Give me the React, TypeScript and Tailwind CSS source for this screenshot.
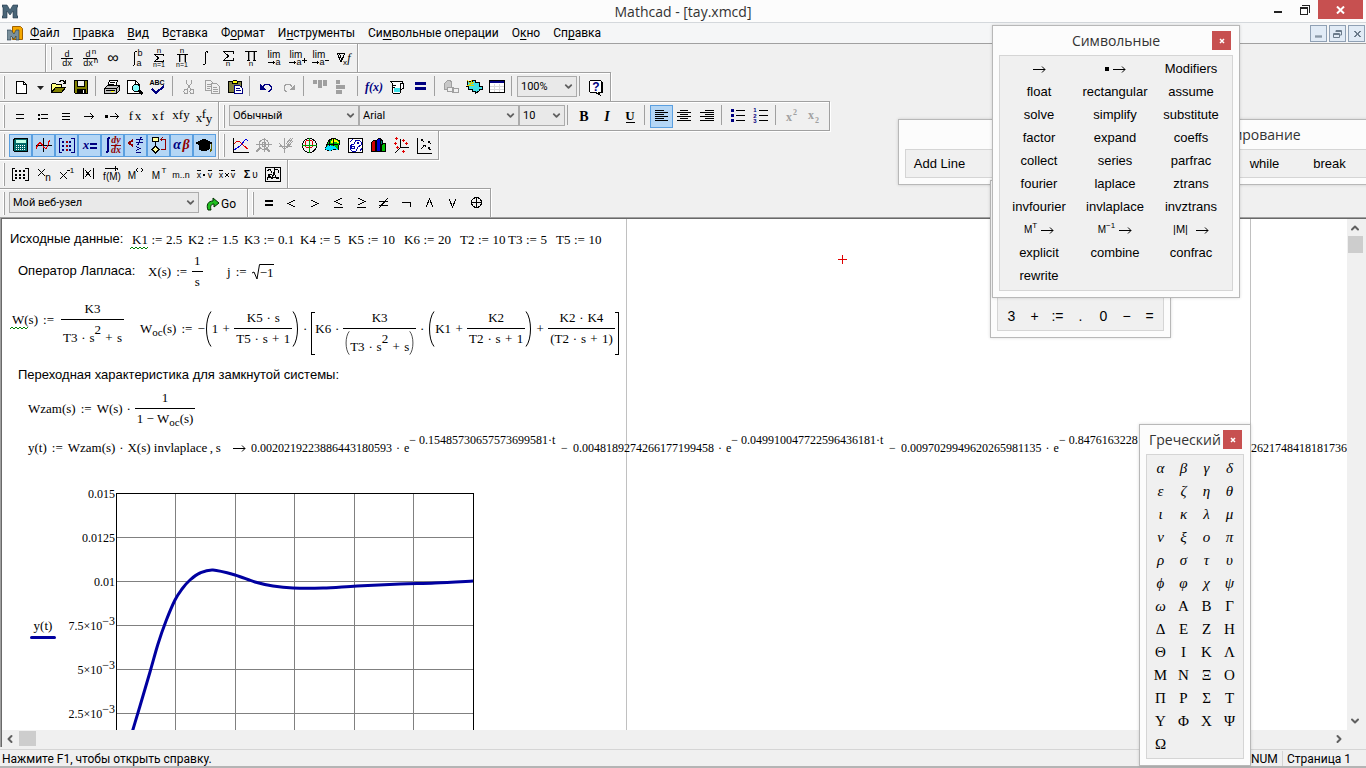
import { ReactNode } from "react";
import { ChevronDown, ChevronLeft, ChevronRight, ChevronUp } from "lucide-react";

const NAVY = "#000080";
const GREY = "#a0a0a0";

/* ---------- icon helpers ---------- */

function Icon({ children, color = "#000" }: { children: ReactNode; color?: string }) {
  return (
    <svg
      width="23"
      height="23"
      viewBox="0 0 23 23"
      fill="none"
      stroke={color}
      shapeRendering="crispEdges"
      aria-hidden="true"
      className="block shrink-0"
    >
      {children}
    </svg>
  );
}

interface GlyphProps {
  x: number;
  y: number;
  size?: number;
  children: ReactNode;
  serif?: boolean;
  bold?: boolean;
  italic?: boolean;
  fill?: string;
}

function Glyph({ x, y, size = 9, children, serif, bold, italic, fill = "#000" }: GlyphProps) {
  return (
    <text
      x={x}
      y={y}
      fontSize={size}
      textAnchor="middle"
      stroke="none"
      fill={fill}
      fontWeight={bold ? 700 : 400}
      fontStyle={italic ? "italic" : "normal"}
      className={serif ? "font-['Liberation_Serif']" : "font-['Liberation_Sans']"}
    >
      {children}
    </text>
  );
}

type Tool = { name: string; icon: ReactNode; active?: boolean };

/* ---------- calculus ---------- */

const calculus: Tool[] = [
  {
    name: "Derivative",
    icon: (
      <Icon>
        <Glyph x={11} y={10} size={9}>d</Glyph>
        <path d="M5 11.5h12" />
        <Glyph x={11} y={19} size={9}>dx</Glyph>
      </Icon>
    ),
  },
  {
    name: "Nth derivative",
    icon: (
      <Icon>
        <Glyph x={9} y={10} size={9}>d</Glyph>
        <Glyph x={15} y={7} size={8}>n</Glyph>
        <path d="M4 11.5h14" />
        <Glyph x={9} y={19} size={9}>dx</Glyph>
        <Glyph x={17} y={16} size={8}>n</Glyph>
      </Icon>
    ),
  },
  { name: "Infinity", icon: <Icon><Glyph x={11} y={16} size={16}>∞</Glyph></Icon> },
  {
    name: "Definite integral",
    icon: (
      <Icon>
        <path d="M11.5 4.5h-1l-1 1v12l-1 1h-1" />
        <Glyph x={15} y={9} size={9}>b</Glyph>
        <Glyph x={14} y={19} size={9}>a</Glyph>
      </Icon>
    ),
  },
  {
    name: "Summation",
    icon: (
      <Icon>
        <Glyph x={11} y={6} size={8}>n</Glyph>
        <path d="M15.5 9V7.500H6.500L10.500 11L6.500 14.500H15.500V13" />
        <Glyph x={11} y={20} size={7}>n=1</Glyph>
      </Icon>
    ),
  },
  {
    name: "Iterated product",
    icon: (
      <Icon>
        <Glyph x={11} y={6} size={8}>n</Glyph>
        <path d="M6 7.500h11M8.500 8v7M14.500 8v7" />
        <path d="M9.500 8v7M13.500 8v7" stroke={GREY} />
        <Glyph x={11} y={20} size={7}>n=1</Glyph>
      </Icon>
    ),
  },
  { name: "Indefinite integral", icon: <Icon><path d="M13.500 5.500v-1h-1l-1 1v11l-1 1h-1v-1" /></Icon> },
  {
    name: "Range summation",
    icon: (
      <Icon>
        <path d="M16.500 7V4.500H6.500L11.500 9L6.500 13.500H16.500V11" />
        <Glyph x={11} y={19} size={8}>n</Glyph>
      </Icon>
    ),
  },
  {
    name: "Range product",
    icon: (
      <Icon>
        <path d="M5 4.500h12M8.500 5v8M14.500 5v8M7 13.500h3M13 13.500h3" />
        <path d="M9.500 5v8M13.500 5v8" stroke={GREY} />
        <Glyph x={11} y={19} size={8}>n</Glyph>
      </Icon>
    ),
  },
  {
    name: "Limit",
    icon: (
      <Icon>
        <Glyph x={11} y={11} size={10}>lim</Glyph>
        <path d="M5 15.500h7M10.500 14v3" />
        <Glyph x={15} y={18} size={9}>a</Glyph>
      </Icon>
    ),
  },
  {
    name: "Right limit",
    icon: (
      <Icon>
        <Glyph x={10} y={11} size={10}>lim</Glyph>
        <path d="M3 15.500h7M8.500 14v3M16 13.500h5M18.500 11v5" />
        <Glyph x={13} y={18} size={9}>a</Glyph>
      </Icon>
    ),
  },
  {
    name: "Left limit",
    icon: (
      <Icon>
        <Glyph x={10} y={11} size={10}>lim</Glyph>
        <path d="M3 15.500h7M8.500 14v3M16 13.500h4" />
        <Glyph x={13} y={18} size={9}>a</Glyph>
      </Icon>
    ),
  },
  {
    name: "Gradient",
    icon: (
      <Icon>
        <path d="M5 6.500h8M5.500 7l3.500 8l3.500-8M7.500 7l2.500 6" />
        <Glyph x={13} y={18} size={8}>x</Glyph>
        <Glyph x={17} y={15} size={12} italic serif>f</Glyph>
      </Icon>
    ),
  },
];

/* ---------- standard ---------- */

const openIcon = (
  <Icon>
    <path d="M4.500 16.500v-8l1-1h3l1 1h5v3" fill="#ffff80" />
    <path d="M4.500 16.500l4-5h10l-4 5z" fill="#808000" />
    <path d="M12 5.500h1l1-1h2l2 2M18.500 4v3h-3" />
  </Icon>
);

const saveIcon = (
  <Icon>
    <path d="M4.500 4.500h13v13h-12l-1-1z" fill="#808000" />
    <path d="M7.500 4.500h7v6h-7z" fill="#f0f0f0" />
    <path d="M7.500 13.500h8v4h-8z" fill="#000" />
    <path d="M13.500 14v3" stroke="#fff" />
  </Icon>
);

const printTools: Tool[] = [
  {
    name: "Print",
    icon: (
      <Icon>
        <path d="M8.500 4.500h8l-2 6h-8z" fill="#fff" />
        <path d="M9 6.500h5M8 8.500h5" />
        <path d="M3.500 12.500l3-3h12v5l-3 3h-12z" fill="#c0c0c0" />
        <path d="M3.500 12.500h12v5M15.500 12.500l3-3M5 14.500h9" />
        <path d="M10 15.500h3" stroke="#ffff00" />
      </Icon>
    ),
  },
  {
    name: "Print preview",
    icon: (
      <Icon>
        <path d="M3.500 4.500h8l4 4v9h-12z" fill="#fff" />
        <path d="M11.500 4.500v4h4" />
        <circle cx="12" cy="12" r="3.500" fill="#80ffff" />
        <path d="M14.500 14.500l4 4M15.500 14.500l3 3" strokeWidth="2" />
      </Icon>
    ),
  },
  {
    name: "Check spelling",
    icon: (
      <Icon>
        <Glyph x={10} y={9} size={7} bold>ABC</Glyph>
        <path d="M5 13l4 4l8-7" stroke={NAVY} strokeWidth="2" />
      </Icon>
    ),
  },
];

const clipboardTools: Tool[] = [
  {
    name: "Cut",
    icon: (
      <Icon color={GREY}>
        <path d="M8.500 4v3l5 7M13.500 4v3l-5 7" />
        <circle cx="8" cy="15.500" r="2" />
        <circle cx="14" cy="15.500" r="2" />
      </Icon>
    ),
  },
  {
    name: "Copy",
    icon: (
      <Icon color={GREY}>
        <path d="M4.500 4.500h5l3 3v7h-8zM6 8.500h4M6 10.500h4M6 12.500h3" />
        <path d="M10.500 7.500h5l3 3v7h-8z" fill="#f0f0f0" />
        <path d="M12 11.500h4M12 13.500h5M12 15.500h5" />
      </Icon>
    ),
  },
  {
    name: "Paste",
    icon: (
      <Icon>
        <path d="M4.500 5.500h13v11h-13z" fill="#808040" />
        <path d="M8.500 7.500v-2l2-1.500h1l2 1.500v2z" fill="#ffff00" />
        <path d="M10.500 9.500h5l3 3v5h-8z" fill="#fff" stroke={NAVY} />
        <path d="M12 12.500h4M12 14.500h5" stroke={NAVY} />
      </Icon>
    ),
  },
];

const undoTools: Tool[] = [
  {
    name: "Undo",
    icon: (
      <Icon color={NAVY}>
        <path d="M8 10.500l2-2h4l2 2v3l-2 2h-1" />
        <path d="M5 8v6h6z" fill={NAVY} stroke="none" />
      </Icon>
    ),
  },
  {
    name: "Redo",
    icon: (
      <Icon color={GREY}>
        <path d="M14 10.500l-2-2h-4l-2 2v3l2 2h1" />
        <path d="M17 8v6h-6z" fill={GREY} stroke="none" />
      </Icon>
    ),
  },
];

const alignTools: Tool[] = [
  {
    name: "Align across",
    icon: (
      <Icon>
        <path d="M4 4h4v4h-4zM9 4h4v8h-4zM14 4h4v6h-4z" fill={GREY} stroke="none" />
      </Icon>
    ),
  },
  {
    name: "Align down",
    icon: (
      <Icon>
        <path d="M4 4h4v4h-4zM4 9h9v4h-9zM4 14h6v4h-6z" fill={GREY} stroke="none" />
      </Icon>
    ),
  },
];

const insertTools: Tool[] = [
  { name: "Insert function", icon: <Icon><Glyph x={11} y={15} size={12} serif bold italic fill={NAVY}>f(x)</Glyph></Icon> },
  {
    name: "Insert unit",
    icon: (
      <Icon>
        <path d="M4.500 5.500h12v2h-2v9l-1 1h-6l-1-1v-9zM14.500 7.500h3v5l-3 1" fill="#fff" />
        <path d="M8 12h6v4h-6z" fill="#40e0e8" stroke="none" />
        <path d="M7 9.500h3M7 11.500h2" />
      </Icon>
    ),
  },
  { name: "Calculate", icon: <Icon><path d="M6 6h11v3h-11zM6 11h11v3h-11z" fill={NAVY} stroke="none" /></Icon> },
];

const linkTools: Tool[] = [
  {
    name: "Insert hyperlink",
    icon: (
      <Icon color={GREY}>
        <path d="M4.500 7.500l3-3h3l1 2v7h-7z" fill="#c8c8c8" />
        <path d="M7.500 11.500h6v4h-6zM12.500 12.500h6v4h-6z" fill="#f0f0f0" />
      </Icon>
    ),
  },
  {
    name: "Component wizard",
    icon: (
      <Icon>
        <path d="M5 5h4v-1h3v2h4v4h3v3h-3v2l-4 3v-3h-3v-2h-4v-3h-1z" fill="#40e0e8" />
        <path d="M4 4l4 4M9 4l-3 6M4 9h7M11 6l-4 3" stroke="#e0d000" />
      </Icon>
    ),
  },
  {
    name: "Insert table",
    icon: (
      <Icon>
        <path d="M3.500 4.500h15v12h-15z" fill="#fff" />
        <path d="M4 5h14v2h-14z" fill={NAVY} stroke="none" />
        <path d="M8.500 8v8M13.500 8v8M4 10.500h14M4 13.500h14" stroke="#d8d8d8" />
      </Icon>
    ),
  },
];

const helpTools: Tool[] = [
  {
    name: "Help",
    icon: (
      <Icon>
        <path d="M4.500 5.500l1-1h10l1 1v10l-1 1h-2l1 2l-4-2h-5l-1-1z" fill="#fff" />
        <path d="M17.500 6v10h-2" />
        <Glyph x={11} y={15} size={12} bold fill={NAVY}>?</Glyph>
      </Icon>
    ),
  },
];

/* ---------- evaluation ---------- */

const arrow = "M6 11.500h10M12.500 8.500l3 3l-3 3";

const evaluation: Tool[] = [
  { name: "Evaluate", icon: <Icon><path d="M7 9.500h8M7 13.500h8" /></Icon> },
  { name: "Define", icon: <Icon><path d="M9 9.500h7M9 13.500h7M6 9h2M6 10h2M6 13h2M6 14h2" /></Icon> },
  { name: "Global definition", icon: <Icon><path d="M7 8.500h8M7 11.500h8M7 14.500h8" /></Icon> },
  { name: "Symbolic evaluation", icon: <Icon><path d={arrow} /></Icon> },
  { name: "Keyword evaluation", icon: <Icon><path d="M9 11.500h9M14.500 8.500l3 3l-3 3" /><path d="M4 10h3v3h-3z" fill="#000" stroke="none" /></Icon> },
  { name: "Prefix", icon: <Icon><Glyph x={7} y={15} size={13} serif>f</Glyph><Glyph x={14} y={15} size={13} serif>x</Glyph></Icon> },
  { name: "Postfix", icon: <Icon><Glyph x={8} y={15} size={13} serif>x</Glyph><Glyph x={15} y={15} size={13} serif>f</Glyph></Icon> },
  { name: "Infix", icon: <Icon><Glyph x={11} y={14} size={13} serif>xfy</Glyph></Icon> },
  {
    name: "Treefix",
    icon: (
      <Icon>
        <Glyph x={6} y={17} size={13} serif>x</Glyph>
        <Glyph x={11} y={13} size={13} serif>f</Glyph>
        <Glyph x={16} y={18} size={13} serif>y</Glyph>
      </Icon>
    ),
  },
];

const styleTools: Tool[] = [
  { name: "Bold", icon: <Icon><Glyph x={11} y={16} size={14} serif bold>B</Glyph></Icon> },
  { name: "Italic", icon: <Icon><Glyph x={11} y={16} size={14} serif bold italic>I</Glyph></Icon> },
  { name: "Underline", icon: <Icon><Glyph x={11} y={15} size={13} serif bold>U</Glyph><path d="M7 17.500h9" /></Icon> },
];

const alignText: Tool[] = [
  { name: "Left", active: true, icon: <Icon><path d="M5 5.500h9M5 7.500h13M5 9.500h9M5 11.500h13M5 13.500h9M5 15.500h13" /></Icon> },
  { name: "Center", icon: <Icon><path d="M7 5.500h8M4 7.500h14M7 9.500h8M4 11.500h14M7 13.500h8M4 15.500h14" /></Icon> },
  { name: "Right", icon: <Icon><path d="M9 5.500h9M4 7.500h14M9 9.500h9M4 11.500h14M9 13.500h9M4 15.500h14" /></Icon> },
];

const listTools: Tool[] = [
  {
    name: "Bullets",
    icon: (
      <Icon>
        <path d="M9 5.500h9M9 10.500h9M9 15.500h9" />
        <path d="M4 4h3v3h-3zM4 9h3v3h-3zM4 14h3v3h-3z" fill={NAVY} stroke="none" />
      </Icon>
    ),
  },
  {
    name: "Numbering",
    icon: (
      <Icon>
        <path d="M9 5.500h9M9 10.500h9M9 15.500h9" />
        <Glyph x={5} y={7} size={6} bold fill={NAVY}>1</Glyph>
        <Glyph x={5} y={13} size={6} bold fill={NAVY}>2</Glyph>
        <Glyph x={5} y={18} size={6} bold fill={NAVY}>3</Glyph>
      </Icon>
    ),
  },
];

const scriptTools: Tool[] = [
  { name: "Superscript", icon: <Icon><Glyph x={8} y={16} size={12} serif bold fill={GREY}>x</Glyph><Glyph x={14} y={10} size={8} serif bold fill={GREY}>2</Glyph></Icon> },
  { name: "Subscript", icon: <Icon><Glyph x={7} y={14} size={12} serif bold fill={GREY}>x</Glyph><Glyph x={13} y={18} size={8} serif bold fill={GREY}>2</Glyph></Icon> },
];

/* ---------- math palettes ---------- */

const palettes: Tool[] = [
  {
    name: "Calculator",
    icon: (
      <Icon>
        <path d="M4.500 5.500l2-1h12v13h-13l-1-1z" fill="#006868" />
        <path d="M7 6h10v3h-10z" fill="#c0ffe8" stroke="none" />
        <path d="M7 11.500h10M7 13.500h10M7 15.500h10" stroke="#fff" strokeDasharray="1 1" />
      </Icon>
    ),
  },
  {
    name: "Graph",
    icon: (
      <Icon>
        <path d="M4 11.500h16M11.500 4v14" />
        <path d="M4 14.500l2-4l2-2l2 2l2 3l2 1l2-3l1-4l1-1" stroke="#e00000" />
      </Icon>
    ),
  },
  {
    name: "Matrix",
    icon: (
      <Icon>
        <path d="M7 4.500h-3v14h3M16 4.500h3v14h-3" stroke={NAVY} />
        <path d="M7 7h2v2h-2zM14 7h2v2h-2zM7 11h2v2h-2zM14 11h2v2h-2zM7 15h2v2h-2zM14 15h2v2h-2z" fill={NAVY} stroke="none" />
        <path d="M11 7h2v2h-2zM11 11h2v2h-2zM11 15h2v2h-2z" fill="#a00000" stroke="none" />
      </Icon>
    ),
  },
  { name: "Evaluation", icon: <Icon><Glyph x={8} y={15} size={13} serif bold italic fill={NAVY}>x</Glyph><path d="M12 10h7M12 14h7" stroke={NAVY} strokeWidth="2" /></Icon> },
  {
    name: "Calculus",
    icon: (
      <Icon>
        <path d="M9 4h-1l-1 1v12l-1 1h-1" stroke={NAVY} strokeWidth="2" />
        <Glyph x={15} y={9} size={10} serif bold italic fill="#900000">dy</Glyph>
        <path d="M10 11.500h10" stroke="#900000" />
        <Glyph x={15} y={19} size={10} serif bold italic fill="#900000">dx</Glyph>
      </Icon>
    ),
  },
  {
    name: "Boolean",
    icon: (
      <Icon>
        <path d="M9 6l-4 3l4 3" stroke="#900000" strokeWidth="2" />
        <path d="M12 5.500h7M12 8.500h7M17 3l-3 8" stroke={NAVY} strokeWidth="1.500" />
        <path d="M12 12.500l4 2l-4 2M12 18.500h5" stroke={NAVY} />
      </Icon>
    ),
  },
  {
    name: "Programming",
    icon: (
      <Icon>
        <path d="M5 3.500h6v4h-6zM8.500 8v4M8.500 12l3.500 3.500l-3.500 3.500l-3.500-3.500z" fill="#ffffa0" />
        <path d="M13 5.500h5v10h-4M15.500 3.500l-2 2l2 2" stroke="#900000" />
      </Icon>
    ),
  },
  {
    name: "Greek",
    icon: (
      <Icon>
        <Glyph x={7} y={15} size={14} serif bold italic fill={NAVY}>α</Glyph>
        <Glyph x={16} y={15} size={14} serif bold italic fill="#900000">β</Glyph>
      </Icon>
    ),
  },
  {
    name: "Symbolic",
    icon: (
      <Icon>
        <path d="M3 9l8-4l8 4l-8 4z" fill="#000" />
        <path d="M6 11v4l5 2l5-2v-4z" fill="#000" />
        <path d="M18.500 10v7M17.500 15v3" stroke="#606000" />
      </Icon>
    ),
  },
];

const graphTools: Tool[] = [
  {
    name: "X-Y plot",
    icon: (
      <Icon>
        <path d="M4.500 4v14h15" />
        <path d="M5 16l6-4l6-7l2 2" stroke="#0000e0" />
        <path d="M5 10l3-3l3 1l4 4l4 3" stroke="#e00000" />
      </Icon>
    ),
  },
  {
    name: "Zoom",
    icon: (
      <Icon color={GREY}>
        <circle cx="12" cy="10.500" r="5" />
        <circle cx="12" cy="10.500" r="2" />
        <path d="M4 10.500h16M12.500 4v14M4 18l4-4M14 14l4 4" strokeWidth="1.500" />
      </Icon>
    ),
  },
  {
    name: "Trace",
    icon: (
      <Icon color={GREY}>
        <path d="M4 12.500h13M9.500 4v15M4 9l5 6l6-3M12 12l6-8M11 10l5-6M12 14l6-7" />
      </Icon>
    ),
  },
  {
    name: "Polar plot",
    icon: (
      <Icon>
        <circle cx="11.500" cy="11.500" r="7" />
        <circle cx="11" cy="10" r="4" stroke="#e00000" />
        <path d="M4 11.500h15M11.500 4v15" stroke="#00a000" />
      </Icon>
    ),
  },
  {
    name: "Surface plot",
    icon: (
      <Icon>
        <path d="M4 15l4-9l5-2l6 3l-2 9l-4-1l-4 2z" fill="#00c800" />
        <path d="M11 5l5 1l2 3l-4-1l-4 1z" fill="#ffff00" stroke="none" />
        <path d="M4 15l3-4l6 1l4 4l-4-1l-4 2z" fill="#00e0ff" stroke="none" />
        <path d="M8 6l1 6M13 4l-1 8M6 10l11 1" />
      </Icon>
    ),
  },
  {
    name: "Contour plot",
    icon: (
      <Icon color="#0000b0">
        <path d="M4.500 4.500h14v14h-14z" fill="#fff" stroke="#000" />
        <path d="M6 8l3-3M6 13l2-3h2l2-4h3l2 2v3l-3 2l-2 4h-4l-2-2zM16 17l2-3" />
        <circle cx="14" cy="9" r="1" />
        <circle cx="9" cy="13.500" r="1.500" />
      </Icon>
    ),
  },
  {
    name: "3D bar plot",
    icon: (
      <Icon>
        <path d="M4.500 8.500l2-2h2v11h-4z" fill="#d00000" />
        <path d="M9.500 6.500l2-2h2v13h-4z" fill="#0000d0" />
        <path d="M13.500 5.500l2 1v5h-2z" fill="#008080" />
        <path d="M14.500 10.500l2-1h2v8h-4z" fill="#00c000" />
      </Icon>
    ),
  },
  {
    name: "3D scatter plot",
    icon: (
      <Icon>
        <path d="M10.500 5v8M10 13.500h9M10 14l-5 5" />
        <path d="M5 4.500h3M6.500 3v3M12 6.500h3M13.500 5v3M4 9.500h3M5.500 8v3M15 9.500h3M16.500 8v3M6 13.500h3M7.500 12v3M12 17.500h3M13.500 16v3" stroke="#e00000" />
      </Icon>
    ),
  },
  {
    name: "Vector field plot",
    icon: (
      <Icon>
        <path d="M4.500 4v15h14" />
        <path d="M8 5l3 3M8 5h2M8 5v2M15 7l3 3M15 7h2M15 7v2M12 11l-4 4M12 11h-2M12 11v2M15 14l3 2M15 13h2M15 13v2" />
      </Icon>
    ),
  },
];

const matrixTools: Tool[] = [
  {
    name: "Matrix",
    icon: (
      <Icon>
        <path d="M6 5.500h-3v12h3M16 5.500h3v12h-3" />
        <path d="M6 7h2v2h-2zM10 7h2v2h-2zM14 7h2v2h-2zM6 11h2v2h-2zM10 11h2v2h-2zM14 11h2v2h-2zM6 14h2v2h-2zM10 14h2v2h-2zM14 14h2v2h-2z" fill="#000" stroke="none" />
      </Icon>
    ),
  },
  { name: "Subscript", icon: <Icon><path d="M6 6l7 7M13 6l-7 7" /><Glyph x={16} y={18} size={10}>n</Glyph></Icon> },
  { name: "Inverse", icon: <Icon><path d="M5 9l7 7M12 9l-7 7M12 7.500h3" /><Glyph x={17} y={10} size={8}>1</Glyph></Icon> },
  { name: "Determinant", icon: <Icon><path d="M5.500 5v11M15.500 5v11M7 7l6 7M13 7l-6 7" /></Icon> },
  { name: "Vectorize", icon: <Icon><path d="M4 5.500h13M14.500 3v5M16 4.500v2" /><Glyph x={11} y={17} size={10}>f(M)</Glyph></Icon> },
  { name: "Matrix column", icon: <Icon><Glyph x={8} y={16} size={10}>M</Glyph><path d="M14 5l-2 2l2 2M17 5l2 2l-2 2" /></Icon> },
  { name: "Transpose", icon: <Icon><Glyph x={9} y={16} size={10}>M</Glyph><Glyph x={17} y={10} size={8}>T</Glyph></Icon> },
  { name: "Range variable", icon: <Icon><Glyph x={11} y={15} size={9}>m..n</Glyph></Icon> },
  { name: "Dot product", icon: <Icon><Glyph x={6} y={15} size={9}>x</Glyph><Glyph x={17} y={15} size={9}>v</Glyph><path d="M4 7.500h4M15 7.500h4" /><path d="M10 11h2v2h-2z" fill="#000" stroke="none" /></Icon> },
  { name: "Cross product", icon: <Icon><Glyph x={5} y={15} size={9}>x</Glyph><Glyph x={17} y={15} size={9}>v</Glyph><path d="M3 7.500h4M15 7.500h4M9 10l4 4M13 10l-4 4" /></Icon> },
  { name: "Vector sum", icon: <Icon><Glyph x={8} y={15} size={11} bold>Σ</Glyph><Glyph x={16} y={15} size={10}>υ</Glyph></Icon> },
  {
    name: "Picture",
    icon: (
      <Icon>
        <path d="M3.500 4.500h15v14h-15z" />
        <path d="M5 17l2-5l3 4l2-7l2 6l3 1M5 8l3-2l2 4M13 6l3 1l1 3M6 14h11M6 11h4M12 5v4" />
      </Icon>
    ),
  },
];

const booleanTools: Tool[] = [
  { name: "Equal to", icon: <Icon><path d="M7 9h8M7 13h8" strokeWidth="2" /></Icon> },
  { name: "Less than", icon: <Icon><path d="M14 8l-7 3.500l7 3.500" /></Icon> },
  { name: "Greater than", icon: <Icon><path d="M7 8l7 3.500l-7 3.500" /></Icon> },
  { name: "Less or equal", icon: <Icon><path d="M15 6l-7 3.500l7 3.500M7 15.500h9" /></Icon> },
  { name: "Greater or equal", icon: <Icon><path d="M8 6l7 3.500l-7 3.500M7 15.500h9" /></Icon> },
  { name: "Not equal", icon: <Icon><path d="M6 9.500h9M6 13.500h9M15 6l-9 10" /></Icon> },
  { name: "Not", icon: <Icon><path d="M6 10.500h8v4" /></Icon> },
  { name: "And", icon: <Icon><path d="M7 15l3.500-8l3.500 8" /></Icon> },
  { name: "Or", icon: <Icon><path d="M7 7l3.500 8l3.500-8" /></Icon> },
  { name: "Exclusive or", icon: <Icon><circle cx="11.500" cy="10.500" r="5" /><path d="M6 10.500h11M11.500 5v11" /></Icon> },
];

/* ---------- toolbar parts ---------- */

function ToolButton({ name, icon, active }: Tool) {
  return (
    <button
      type="button"
      aria-label={name}
      className={`h-[23px] w-[23px] shrink-0 ${
        active ? "bg-[#b4d6f5] outline outline-1 -outline-offset-1 outline-[#5a9fe0]" : "hover:bg-[#dcebf8]"
      }`}
    >
      {icon}
    </button>
  );
}

function Tools({ items, active }: { items: Tool[]; active?: boolean }) {
  return (
    <>
      {items.map((item) => (
        <ToolButton key={item.name} {...item} active={active || item.active} />
      ))}
    </>
  );
}

function Bar({ children }: { children: ReactNode }) {
  return (
    <div className="-mt-px flex h-[30px] w-fit items-start border-y border-r border-[#a0a0a0] pt-[3px] pr-[2px] shadow-[inset_0_1px_0_#fff,1px_1px_0_#fff]">
      {children}
    </div>
  );
}

const Grip = () => (
  <div className="mr-1 ml-[3px] h-[23px] w-[2px] shrink-0 border-r border-l border-r-[#a0a0a0] border-l-white" />
);
const Divider = () => <div className="mr-[5px] ml-[2px] h-5 w-px shrink-0 bg-[#a0a0a0]" />;
const BandEdge = () => (
  <div className="-mt-[3px] h-7 w-[2px] shrink-0 border-r border-l border-r-white border-l-[#a0a0a0]" />
);

function Combo({ label, value, className }: { label: string; value: string; className: string }) {
  return (
    <div className={`relative h-[21px] shrink-0 ${className}`}>
      <select
        aria-label={label}
        defaultValue={value}
        className="block h-full w-full appearance-none border border-[#acacac] bg-[#e9e9e9] pl-[3px] font-['Roboto',sans-serif] text-[11px] leading-4 text-black"
      >
        <option>{value}</option>
      </select>
      <ChevronDown size={11} strokeWidth={4} className="pointer-events-none absolute top-[5px] right-[3px] text-[#606060]" />
    </div>
  );
}

/* ---------- math parts ---------- */

function Region({ children, className, result }: { children: ReactNode; className: string; result?: boolean }) {
  return (
    <div
      className={`absolute flex items-center font-['Liberation_Serif',serif] leading-4 whitespace-nowrap text-black ${
        result ? "text-[12px]" : "text-[13px]"
      } ${className}`}
    >
      {children}
    </div>
  );
}

// Both rows take the taller one's height, so the bar always sits on the axis.
function Frac({ top, bottom }: { top: ReactNode; bottom: ReactNode }) {
  return (
    <span className="inline-grid shrink-0 grid-rows-2 text-center">
      <span className="flex items-end justify-center border-b border-black px-[2px] pb-[2px]">{top}</span>
      <span className="flex items-start justify-center px-[2px] pt-[2px]">{bottom}</span>
    </span>
  );
}

const Dot = () => <span className="w-3 text-center">·</span>;
const Plus = () => <span className="w-4 text-center">+</span>;
const Def = ({ tight }: { tight?: boolean }) => <span className={`text-center ${tight ? "w-[18px]" : "w-[21px]"}`}>:=</span>;
const Minus = () => <span className="w-3">−</span>;

function Paren({ right, className = "h-9 w-[7px]" }: { right?: boolean; className?: string }) {
  return (
    <svg viewBox="0 0 7 36" preserveAspectRatio="none" fill="none" stroke="#000" className={`shrink-0 ${className}`} aria-hidden="true">
      <path d={right ? "M1 0.500C7 8 7 28 1 35.500" : "M6 0.500C0 8 0 28 6 35.500"} />
    </svg>
  );
}

const Sup = ({ children }: { children: ReactNode }) => <span className="-mt-4 leading-4">{children}</span>;
const Sub = ({ children }: { children: ReactNode }) => <span className="mt-[3px] -mb-[3px] text-[11px] leading-4">{children}</span>;

function Woc() {
  return (
    <>
      W<Sub>oc</Sub>(s)
    </>
  );
}

function CubicDenominator() {
  return (
    <span className="flex items-center pt-2">
      T3<Dot />s<Sup>2</Sup><Plus />s
    </span>
  );
}

function Squiggle() {
  return (
    <svg width="20" height="4" viewBox="0 0 20 4" fill="none" stroke="#008000" className="absolute top-[14px] -left-[2px]" aria-hidden="true">
      <path d="M0 3l2-2l2 2l2-2l2 2l2-2l2 2l2-2l2 2l2-2" />
    </svg>
  );
}

const Arrow = () => (
  <svg width="13" height="16" viewBox="0 0 13 16" fill="none" stroke="#000" aria-hidden="true" className="inline-block">
    <path d="M0 8.500h12M9 5.500l3 3l-3 3" />
  </svg>
);

const constants = [
  { name: "K1", value: "2.5", place: "left-[132px]", flagged: true },
  { name: "K2", value: "1.5", place: "left-[188px]" },
  { name: "K3", value: "0.1", place: "left-[244px]" },
  { name: "K4", value: "5", place: "left-[300px]" },
  { name: "K5", value: "10", place: "left-[348px]" },
  { name: "K6", value: "20", place: "left-[404px]" },
  { name: "T2", value: "10", place: "left-[460px]" },
  { name: "T3", value: "5", place: "left-[508px]" },
  { name: "T5", value: "10", place: "left-[556px]" },
];

const ticks = [
  { base: "0.015" },
  { base: "0.0125" },
  { base: "0.01" },
  { base: "7.5×10", exp: "−3" },
  { base: "5×10", exp: "−3" },
  { base: "2.5×10", exp: "−3" },
];

const response = [
  [13, 254], [25, 214], [35, 180], [43, 152], [51, 129], [60, 108], [67, 97], [75, 88], [85, 81], [98, 78],
  [120, 83], [140, 90], [158, 94], [178, 96], [208, 96], [242, 94], [285, 92], [320, 91], [358, 89],
];

// Catmull-Rom through the samples
function smooth(points: number[][]) {
  const at = (i: number) => points[Math.min(Math.max(i, 0), points.length - 1)];
  return points.slice(1).reduce((d, p, i) => {
    const [a, b, c] = [at(i - 1), at(i), at(i + 2)];
    return `${d}C${b[0] + (p[0] - a[0]) / 6} ${b[1] + (p[1] - a[1]) / 6} ${p[0] - (c[0] - b[0]) / 6} ${p[1] - (c[1] - b[1]) / 6} ${p[0]} ${p[1]}`;
  }, `M${points[0][0]} ${points[0][1]}`);
}

function Chart() {
  return (
    <div className="absolute top-[252px] left-[30px] flex font-['Liberation_Serif',serif] text-[12px] text-black">
      <div className="mt-[147px] flex w-[26px] flex-col items-center self-start">
        <span className="text-[13px] leading-4">y(t)</span>
        <span className="mt-[2px] h-[3px] w-full rounded-full bg-[#0000a0]" />
      </div>
      <div className="flex w-[59px] flex-col">
        {ticks.map((t) => (
          <div key={t.base} className="flex h-11 items-start justify-end leading-4 whitespace-nowrap">
            <span className="mt-[15px]">{t.base}</span>
            {t.exp && <span className="mt-[10px]">{t.exp}</span>}
          </div>
        ))}
      </div>
      <svg width="360" height="290" viewBox="0 0 360 290" fill="none" className="mt-[21px]" aria-label="y(t)">
        <g shapeRendering="crispEdges">
          <path
            d="M60.500 1v289M120.500 1v289M179.500 1v289M239.500 1v289M298.500 1v289M1 45.500h357M1 89.500h357M1 133.500h357M1 177.500h357M1 221.500h357"
            stroke="#808080"
          />
          <path d="M1.500 290V1.500H358.500V290" stroke="#000" />
        </g>
        <path d={smooth(response)} stroke="#0000a0" strokeWidth="3" />
      </svg>
    </div>
  );
}

function Worksheet() {
  return (
    <div className="relative min-w-0 flex-1 overflow-hidden bg-white">
      <div className="absolute top-0 bottom-0 left-[624px] w-px bg-[#c0c0c0]" />
      <div className="absolute top-0 bottom-0 left-[1248px] w-px bg-[#c0c0c0]" />
      {/* regions keep their own spot on the sheet */}
      <div className="absolute inset-0 -left-[2px]">
        <p className="absolute top-3 left-[10px] font-['Liberation_Sans',sans-serif] text-[13px] leading-4 whitespace-nowrap">
          Исходные данные:
        </p>
        {constants.map((c) => (
          <Region key={c.name} className={`top-[13px] ${c.place}`}>
            <span className="relative">
              {c.name}
              {c.flagged && <Squiggle />}
            </span>
            <Def tight />
            {c.value}
          </Region>
        ))}

        <p className="absolute top-11 left-[18px] font-['Liberation_Sans',sans-serif] text-[13px] leading-4 whitespace-nowrap">
          Оператор Лапласа:
        </p>
        <Region className="top-[34px] left-[148px]">
          X(s)<Def />
          <Frac top="1" bottom="s" />
        </Region>
        <Region className="top-11 left-[227px]">
          j<Def />
          <svg width="8" height="16" viewBox="0 0 8 16" fill="none" stroke="#000" className="mt-px" aria-hidden="true">
            <path d="M0 9l2-1l3 7L7.500 .5H8" />
          </svg>
          <span className="border-t border-black pr-px leading-[15px]">−1</span>
        </Region>

        <Region className="top-[75px] left-3">
          <span className="relative">
            W(s)
            <Squiggle />
          </span>
          <Def />
          <span className="w-[2px]" />
          <Frac top="K3" bottom={<CubicDenominator />} />
        </Region>

        <Region className="top-[84px] left-[140px]">
          <Woc />
          <Def />
          −
          <Paren />
          1
          <Plus />
          <Frac top={<>K5<Dot />s</>} bottom={<>T5<Dot />s<Plus />1</>} />
          <Paren right />
          <Dot />
          <span className="mt-2 h-[43px] w-1 border-y border-l border-black" />
          K6
          <Dot />
          <Frac
            top="K3"
            bottom={
              <span className="flex items-center">
                <Paren className="h-6 w-[5px]" />
                <CubicDenominator />
                <Paren right className="h-6 w-[5px]" />
              </span>
            }
          />
          <Dot />
          <Paren />
          K1
          <Plus />
          <Frac top="K2" bottom={<>T2<Dot />s<Plus />1</>} />
          <Paren right />
          <Plus />
          <Frac top={<>K2<Dot />K4</>} bottom={<>(T2<Dot />s<Plus />1)</>} />
          <span className="mt-2 h-[43px] w-1 border-y border-r border-black" />
        </Region>

        <p className="absolute top-[148px] left-[18px] font-['Liberation_Sans',sans-serif] text-[13px] leading-4 whitespace-nowrap">
          Переходная характеристика для замкнутой системы:
        </p>
        <Region className="top-[171px] left-7">
          Wzam(s)<Def />W(s)<Dot />
          <Frac top="1" bottom={<>1 −&nbsp;<Woc /></>} />
        </Region>

        <Region className="top-[221px] left-7">
          y(t)<Def />Wzam(s)<Dot />X(s)&nbsp;invlaplace&thinsp;,&thinsp;s
        </Region>
        <Region className="top-[221px] left-[233px]">
          <Arrow />
        </Region>
        <Region result className="top-[221px] left-[251px]">
          0.0020219223886443180593<Dot />e<Sup>− 0.15485730657573699581·t</Sup>
        </Region>
        <Region result className="top-[221px] left-[561px]">
          <Minus />0.0048189274266177199458<Dot />e<Sup>− 0.049910047722596436181·t</Sup>
        </Region>
        <Region result className="top-[221px] left-[889px]">
          <Minus />0.0097029949620265981135<Dot />e<Sup>− 0.8476163228</Sup>
        </Region>
        <Region result className="top-[221px] left-[1245px]">52621748418181736</Region>

        <Chart />

        <svg width="9" height="9" viewBox="0 0 9 9" stroke="#e00000" className="absolute top-9 left-[838px]" aria-hidden="true">
          <path d="M0 4.500h9M4.500 0v9" />
        </svg>
      </div>
    </div>
  );
}

/* ---------- floating palettes ---------- */

interface PaletteProps {
  title?: string;
  children: ReactNode;
  className: string;
  titleClass?: string;
  closable?: boolean;
}

function Palette({ title, children, className, titleClass = "justify-center", closable }: PaletteProps) {
  return (
    <section className={`absolute flex flex-col border border-[#b8b8b8] bg-[#fcfcfc] px-[6px] pb-[6px] shadow-[0_0_3px_rgba(0,0,0,0.15)] ${className}`}>
      {title && (
        <header className={`flex h-[29px] shrink-0 items-center font-['Open_Sans',sans-serif] text-[14px] text-[#333] ${titleClass}`}>
          <h2>{title}</h2>
        </header>
      )}
      {closable && (
        <button type="button" aria-label="Закрыть" className="absolute top-[5px] right-2 flex h-[19px] w-[19px] items-center justify-center bg-[#c75050]">
          <svg width="6" height="6" viewBox="0 0 6 6" stroke="#fff" strokeWidth="1.500" aria-hidden="true">
            <path d="M1 1l4 4M5 1l-4 4" />
          </svg>
        </button>
      )}
      {children}
    </section>
  );
}

const symbolic: { key: string; face?: ReactNode }[] = [
  { key: "→", face: <Arrow /> },
  { key: "▪→", face: <><span className="mr-1 h-1 w-1 bg-black" /><Arrow /></> },
  { key: "Modifiers" },
  { key: "float" }, { key: "rectangular" }, { key: "assume" },
  { key: "solve" }, { key: "simplify" }, { key: "substitute" },
  { key: "factor" }, { key: "expand" }, { key: "coeffs" },
  { key: "collect" }, { key: "series" }, { key: "parfrac" },
  { key: "fourier" }, { key: "laplace" }, { key: "ztrans" },
  { key: "invfourier" }, { key: "invlaplace" }, { key: "invztrans" },
  { key: "MT", face: <><span className="text-[10px]">M</span><sup className="mr-1 text-[8px]">T</sup><Arrow /></> },
  { key: "M-1", face: <><span className="text-[10px]">M</span><sup className="mr-1 text-[8px]">−1</sup><Arrow /></> },
  { key: "|M|", face: <><span className="mr-2 text-[11px]">|M|</span><Arrow /></> },
  { key: "explicit" }, { key: "combine" }, { key: "confrac" },
  { key: "rewrite" },
];

const greek = "αβγδεζηθικλμνξοπρστυϕφχψωΑΒΓΔΕΖΗΘΙΚΛΜΝΞΟΠΡΣΤΥΦΧΨΩ".split("");
const calculator = ["3", "+", ":=", ".", "0", "−", "="];

const menus = [
  ["", "Ф", "айл"],
  ["", "П", "равка"],
  ["", "В", "ид"],
  ["В", "с", "тавка"],
  ["Ф", "о", "рмат"],
  ["И", "н", "струменты"],
  ["Си", "м", "вольные операции"],
  ["О", "к", "но"],
  ["Сп", "р", "авка"],
];

function MLogo({ small }: { small?: boolean }) {
  return (
    <svg width="16" height="15" viewBox="0 0 16 15" aria-hidden="true">
      {small && <path d="M5.500 .5h8l2 2v11h-10z" fill="#f5a800" stroke="#a06000" />}
      <path
        d={small ? "M0 4h4l3 4l2-4h3v10h-3v-4l-2 3l-3-3v4h-4z" : "M0 1h5l3 5l3-5h5v2h-1v9h1v2h-5v-7l-3 4l-3-4v7h-5v-2h1v-9h-1z"}
        fill={small ? "#7a909c" : "#4a6678"}
        stroke="#22384a"
        strokeWidth=".6"
      />
    </svg>
  );
}

function TitleBar() {
  return (
    <header className="relative flex h-[22px] shrink-0 items-center justify-center bg-[#fcfcfc]">
      <span className="absolute top-1 left-[2px]"><MLogo /></span>
      <h1 className="font-['Open_Sans',sans-serif] text-[14px] text-[#333]">Mathcad - [tay.xmcd]</h1>
      <div className="absolute top-0 right-[3px] flex h-[19px] items-center">
        <button type="button" aria-label="Свернуть" className="flex h-full w-[26px] items-center justify-center">
          <span className="mt-1 h-[2px] w-2 bg-[#222]" />
        </button>
        <button type="button" aria-label="Восстановить" className="flex h-full w-[27px] items-center justify-center">
          <svg width="10" height="10" viewBox="0 0 10 10" fill="none" stroke="#222" shapeRendering="crispEdges" aria-hidden="true">
            <path d="M.5 2.500h7v7h-7zM0 3.500h8M2 .5h7.500v7" />
          </svg>
        </button>
        <button type="button" aria-label="Закрыть" className="flex h-full w-[45px] items-center justify-center bg-[#c75050]">
          <svg width="9" height="8" viewBox="0 0 9 8" stroke="#fff" strokeWidth="2" aria-hidden="true">
            <path d="M1 .5l7 7M8 .5l-7 7" />
          </svg>
        </button>
      </div>
    </header>
  );
}

const windowButtons = [
  { name: "Свернуть окно", icon: "M4 10h7M4 11h7" },
  { name: "Восстановить окно", icon: "M3.500 7.500h6v4h-6zM4 8.500h5M6 6V4.500h5.500V9H10M6 5.500h5" },
  { name: "Закрыть окно", icon: "M5 5l6 6M11 5l-6 6M6 5l6 6M12 5l-6 6" },
];

function MenuBar() {
  return (
    <nav className="flex h-[21px] shrink-0 items-center border-t border-[#d4d8dc] bg-[#f5f6f7] pr-px pl-[7px]">
      <MLogo small />
      <div className="ml-[7px] flex flex-1 gap-[13px] font-['Roboto',sans-serif] text-[12px] text-black">
        {menus.map(([before, key, after]) => (
          <button type="button" key={before + key + after} className="whitespace-nowrap">
            {before}
            <u className="underline-offset-2">{key}</u>
            {after}
          </button>
        ))}
      </div>
      <div className="flex gap-[2px]">
        {windowButtons.map((b) => (
          <button type="button" key={b.name} aria-label={b.name} className="h-[17px] w-[17px] border border-[#8fa0b4] bg-[#e1ebf6]">
            <svg width="15" height="15" viewBox="0 0 15 15" fill="none" stroke="#6c7c8c" aria-hidden="true">
              <path d={b.icon} />
            </svg>
          </button>
        ))}
      </div>
    </nav>
  );
}

export default function App() {
  return (
    <div className="relative flex h-screen flex-col overflow-hidden bg-[#f0f0f0] text-black">
      <TitleBar />
      <MenuBar />

      <div className="shrink-0 border-t border-[#a0a0a0]">
        <Bar>
          <div className="w-[45px]" />
          <BandEdge />
          <Grip />
          <Tools items={calculus} />
        </Bar>
        <Bar>
          <Grip />
          <div className="w-px" />
          <ToolButton
            name="New"
            icon={
              <Icon>
                <path d="M6.500 5.500h7l3 3v9h-10z" fill="#fff" />
                <path d="M13.500 5.500v3h3" />
              </Icon>
            }
          />
          <button type="button" aria-label="Templates" className="flex h-[23px] w-[14px] items-center justify-center">
            <svg width="7" height="4" viewBox="0 0 7 4" aria-hidden="true">
              <path d="M0 0h7L3.500 4z" fill="#222" />
            </svg>
          </button>
          <ToolButton name="Open" icon={openIcon} />
          <ToolButton name="Save" icon={saveIcon} />
          <Divider />
          <Tools items={printTools} />
          <Divider />
          <Tools items={clipboardTools} />
          <Divider />
          <Tools items={undoTools} />
          <Divider />
          <Tools items={alignTools} />
          <Divider />
          <Tools items={insertTools} />
          <Divider />
          <Tools items={linkTools} />
          <Divider />
          <Combo label="Zoom" value="100%" className="w-[60px]" />
          <Divider />
          <Tools items={helpTools} />
        </Bar>
        <Bar>
          <Grip />
          <Tools items={evaluation} />
          <div className="w-[2px]" />
          <BandEdge />
          <Grip />
          <Combo label="Style" value="Обычный" className="w-[130px]" />
          <Combo label="Font" value="Arial" className="w-[160px]" />
          <Combo label="Size" value="10" className="w-[46px]" />
          <Divider />
          <Tools items={styleTools} />
          <Divider />
          <Tools items={alignText} />
          <Divider />
          <Tools items={listTools} />
          <Divider />
          <Tools items={scriptTools} />
        </Bar>
        <Bar>
          <Grip />
          <Tools items={palettes} active />
          <div className="w-[2px]" />
          <BandEdge />
          <Grip />
          <Tools items={graphTools} />
        </Bar>
        <Bar>
          <Grip />
          <Tools items={matrixTools} />
        </Bar>
        <Bar>
          <Grip />
          <Combo label="Resources" value="Мой веб-узел" className="w-[190px]" />
          <button type="button" className="ml-[5px] flex h-[23px] w-[43px] items-center font-['Roboto',sans-serif] text-[12px]">
            <svg width="17" height="16" viewBox="0 0 17 16" fill="none" aria-hidden="true">
              <path d="M4 14C2 9 4 5 9 5V2l6 5l-5 4V8c-3 0-4 2-3 6z" fill="#20c020" stroke="#003000" />
            </svg>
            Go
          </button>
          <BandEdge />
          <Grip />
          <Tools items={booleanTools} />
        </Bar>
      </div>

      <main className="-mt-px flex min-h-0 flex-1 flex-col border-t border-l border-[#a0a0a0]">
        <div className="flex min-h-0 flex-1 border-t border-l border-[#696969]">
          <Worksheet />
          <div className="mr-[3px] flex w-4 shrink-0 flex-col items-center bg-[#f0f0f0]">
            <ChevronUp size={12} strokeWidth={4} className="mt-[3px] text-[#606060]" />
            <div className="mt-[2px] h-[17px] w-[15px] bg-[#cdcdcd]" />
            <div className="flex-1" />
            <ChevronDown size={12} strokeWidth={4} className="mb-[3px] text-[#606060]" />
          </div>
        </div>
        <div className="flex h-[17px] shrink-0 items-center border-l border-[#696969] bg-[#f0f0f0]">
          <ChevronLeft size={12} strokeWidth={4} className="ml-[2px] text-[#606060]" />
          <div className="ml-[3px] h-[15px] w-[17px] bg-[#cdcdcd]" />
          <div className="flex-1" />
          <ChevronRight size={12} strokeWidth={4} className="mr-[21px] text-[#606060]" />
        </div>
      </main>

      <footer className="mt-[2px] flex h-[17px] shrink-0 items-center border-t border-[#d5d5d5] pt-[2px] pl-[2px] font-['Roboto',sans-serif] text-[12px] leading-4">
        <span className="flex-1 whitespace-nowrap">Нажмите F1, чтобы открыть справку.</span>
        <span className="w-[34px] border-l border-[#d5d5d5] pl-[2px]">NUM</span>
        <span className="w-[84px] border-l border-[#d5d5d5] pl-1 whitespace-nowrap">Страница 1</span>
      </footer>
      <div className="h-[2px] shrink-0 bg-[#b4b4b4]" />

      <Palette title="Программирование" className="top-[119px] left-[898px] w-[668px]">
        <div className="flex h-[29px] items-center border border-[#d5d5d5] bg-[#f0f0f0] px-px font-['Liberation_Sans',sans-serif] text-[13px] leading-4">
          <button type="button" className="w-[65px] shrink-0">Add Line</button>
          <div className="w-[260px] shrink-0" />
          <button type="button" className="w-[65px] shrink-0">while</button>
          <button type="button" className="w-[65px] shrink-0">break</button>
        </div>
      </Palette>

      <Palette className="top-[180px] left-[990px] h-[158px] w-[181px]">
        <div className="flex flex-1 items-end justify-center border border-t-0 border-[#d5d5d5] bg-[#f0f0f0] pb-[2px] font-['Liberation_Sans',sans-serif] text-[14px]">
          {calculator.map((item) => (
            <button type="button" key={item} className="h-[23px] w-[23px]">
              {item}
            </button>
          ))}
        </div>
      </Palette>

      <Palette title="Символьные" closable className="top-[25px] left-[992px] w-[248px]">
        <div className="grid grid-cols-[repeat(3,76px)] border border-[#d5d5d5] bg-[#f0f0f0] px-px pt-px pb-[3px] font-['Liberation_Sans',sans-serif] text-[13px]">
          {symbolic.map((item) => (
            <button type="button" key={item.key} className="flex h-[23px] items-center justify-center">
              {item.face ?? item.key}
            </button>
          ))}
        </div>
      </Palette>

      <Palette title="Греческий" closable titleClass="justify-start pl-[3px]" className="top-[424px] left-[1139px] w-[112px]">
        <div className="grid grid-cols-[repeat(4,23px)] border border-[#d5d5d5] bg-[#f0f0f0] p-[2px] font-['Liberation_Serif',serif] text-[15px]">
          {greek.map((letter, i) => (
            <button type="button" key={letter} className={`h-[23px] ${i < 25 ? "italic" : ""}`}>
              {letter}
            </button>
          ))}
        </div>
      </Palette>
    </div>
  );
}
